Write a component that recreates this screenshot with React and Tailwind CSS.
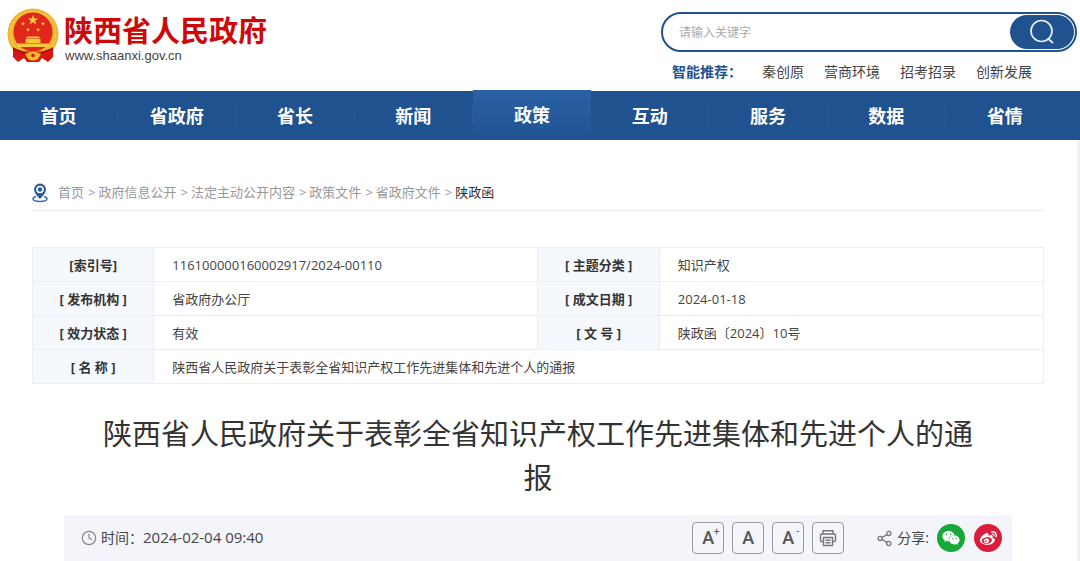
import { Clock, Share2 } from "lucide-react";
import { FaWeixin, FaWeibo } from "react-icons/fa";

const NAV = ["首页", "省政府", "省长", "新闻", "政策", "互动", "服务", "数据", "省情"];
const HOT_WORDS = ["秦创原", "营商环境", "招考招录", "创新发展"];
const CRUMBS = ["首页", "政府信息公开", "法定主动公开内容", "政策文件", "省政府文件"];

const ROWS = [
  ["[索引号]", "116100000160002917/2024-00110", "[ 主题分类 ]", "知识产权"],
  ["[ 发布机构 ]", "省政府办公厅", "[ 成文日期 ]", "2024-01-18"],
  ["[ 效力状态 ]", "有效", "[ 文 号 ]", "陕政函〔2024〕10号"],
];

const TITLE = "陕西省人民政府关于表彰全省知识产权工作先进集体和先进个人的通报";

function Emblem() {
  return (
    <svg viewBox="0 0 52 56" className="h-14 w-[52px]" aria-hidden="true">
      <circle cx="26" cy="26" r="25.5" fill="#ecb62f" />
      <circle cx="26" cy="26" r="22.5" fill="none" stroke="#f3c544" strokeWidth="2" strokeDasharray="4 1" />
      <circle cx="26" cy="24" r="19.5" fill="#e1261c" />
      <path d="M26 7l1.400 3.500h3.800l-3 2.300 1.100 3.600-3.300-2.200-3.300 2.200 1.100-3.600-3-2.300h3.800z" fill="#f8c93a" />
      <g fill="#f8c93a">
        <path d="M16 13.500l.6 1.500h1.600l-1.300 1 .5 1.500-1.400-.9-1.400.9.500-1.500-1.300-1h1.600z" />
        <path d="M36 13.500l.6 1.500h1.600l-1.300 1 .5 1.500-1.400-.9-1.400.9.500-1.500-1.300-1h1.600z" />
        <path d="M21 19.500l.6 1.500h1.600l-1.300 1 .5 1.500-1.400-.9-1.400.9.500-1.500-1.300-1h1.600z" />
        <path d="M31 19.500l.6 1.500h1.600l-1.300 1 .5 1.500-1.400-.9-1.400.9.500-1.500-1.300-1h1.600z" />
        <path d="M20 28.500h12l1 2h-14zM18.500 31h15v4h-15zM10 35.500h32v3.500H10z" />
      </g>
      <path d="M6 39 Q12 43 19 43.500 L33 43.500 Q40 43 46 39 L46 49 L41 54 L35 50 L32 54 L20 54 L17 50 L11 54 L6 49 Z" fill="#d5180f" />
      <path d="M6 41 Q14 43 18 46 M46 41 Q38 43 34 46" fill="none" stroke="#b00d0a" strokeWidth="1.500" />
      <path d="M18 46q8-5 16 0l-3 5q-5 3-10 0z" fill="#f0b92e" />
      <circle cx="26" cy="47.500" r="1.800" fill="#d5180f" />
    </svg>
  );
}

function PinIcon() {
  return (
    <svg viewBox="0 0 16 20" className="h-5 w-4 shrink-0" fill="none" aria-hidden="true">
      <path d="M4 13.500C2 14 1 14.900 1 15.800 1 17.400 4 18.500 8 18.500s7-1.100 7-2.700c0-.9-1-1.800-3-2.300" stroke="#3f6da5" strokeWidth="1.500" />
      <path d="M8 .500a6 6 0 0 0-6 6C2 10.500 8 16 8 16s6-5.500 6-9.500a6 6 0 0 0-6-6z" fill="#2b5b97" />
      <circle cx="8" cy="6.500" r="3.800" fill="#fff" />
      <circle cx="8" cy="6.500" r="2.200" fill="#2b5b97" />
    </svg>
  );
}

function PrintIcon() {
  return (
    <svg viewBox="0 0 18 18" className="size-[18px]" fill="none" stroke="#777" strokeWidth="1.400" aria-hidden="true">
      <path d="M4 5V1.700h10V5" />
      <path d="M4.500 12.500H2.800c-.8 0-1.300-.5-1.300-1.300V6.300C1.500 5.500 2 5 2.800 5h12.400c.8 0 1.300.5 1.300 1.300v4.900c0 .8-.5 1.300-1.300 1.300h-1.700" />
      <path d="M4.500 8.500h9v8h-9zM6.500 11.200h5M6.500 13.800h5" />
    </svg>
  );
}

function ToolButton({ label, children }) {
  return (
    <button
      type="button"
      aria-label={label}
      className="relative flex size-8 items-center justify-center rounded-sm border border-[#999] font-['Roboto','Liberation_Sans',sans-serif] text-lg font-medium leading-none text-[#555]"
    >
      {children}
    </button>
  );
}

export default function App() {
  return (
    <div className="flex min-h-screen flex-col bg-white font-['Open_Sans','Noto_Sans_CJK_SC',sans-serif] text-[13px] text-[#444]">

      {/* HEADER */}
      <header className="flex h-[91px] items-start justify-between pl-[7px] pr-[3px]">
        <a href="#" className="flex items-start gap-[5px] pt-2">
          <Emblem />
          <span className="flex flex-col pt-[7px]">
            <span className="text-[29px] font-bold leading-8 text-[#cc0a0a]">陕西省人民政府</span>
            <span className="pl-px pt-px font-['Liberation_Sans',sans-serif] text-[13px] leading-4 text-[#444]">
              www.shaanxi.gov.cn
            </span>
          </span>
        </a>

        <div className="w-[416px] pt-3">
          <form className="flex h-10 items-stretch rounded-full border-2 border-[#20528f] p-px">
            <input
              type="text"
              aria-label="关键字"
              placeholder="请输入关键字"
              className="min-w-0 flex-1 bg-transparent pl-[15px] pt-[2px] text-xs outline-none placeholder:text-[#aaa]"
            />
            <button
              type="button"
              aria-label="搜索"
              className="flex w-16 items-center justify-center rounded-full bg-[#20528f]"
            >
              <svg viewBox="0 0 26 26" className="size-[26px]" fill="none" stroke="#e8eef6" strokeWidth="1.700">
                <circle cx="12.500" cy="12" r="10.500" />
                <path d="M19 19.500l5 4.500" />
              </svg>
            </button>
          </form>
          <div className="flex gap-5 pl-[11px] pt-[10px] text-sm leading-5">
            <span className="w-[70px] whitespace-nowrap font-bold text-[#20528f]">智能推荐：</span>
            {HOT_WORDS.map((word) => (
              <a key={word} href="#" className="whitespace-nowrap">{word}</a>
            ))}
          </div>
        </div>
      </header>

      {/* NAV */}
      <nav className="grid h-[49px] grid-cols-9 bg-[#20528f] pr-4 text-lg font-bold text-white">
        {NAV.map((item) =>
          item === "政策" ? (
            <a
              key={item}
              href="#"
              aria-current="page"
              className="-mt-px flex items-center justify-center bg-linear-to-b from-[#2b62a6] to-[#20528f]"
            >
              {item}
            </a>
          ) : (
            <a key={item} href="#" className="group flex items-center">
              <span className="flex-1 text-center">{item}</span>
              <span className="h-[18px] w-px bg-[#2d5d98] group-last:hidden" />
            </a>
          )
        )}
      </nav>

      <main className="flex-1 border-r-[3px] border-[#f1f1f1] pl-8 pr-[33px]">

        {/* BREADCRUMB */}
        <div className="mt-[35px] flex h-9 items-center border-b border-[#eee]">
          <PinIcon />
          <div className="flex gap-[3px] pl-[10px] text-[#999]">
            {CRUMBS.map((crumb) => (
              <span key={crumb} className="flex gap-1">
                <a href="#">{crumb}</a>
                <span>&gt;</span>
              </span>
            ))}
            <span className="text-[#333]">陕政函</span>
          </div>
        </div>

        {/* DOCUMENT INFO */}
        <table className="mt-9 w-full table-fixed border-collapse leading-5">
          <colgroup>
            <col className="w-[12%]" />
            <col className="w-[38%]" />
            <col className="w-[12%]" />
            <col className="w-[38%]" />
          </colgroup>
          <tbody>
            {ROWS.map(([nameA, valueA, nameB, valueB]) => (
              <tr key={nameA} className="h-[34px]">
                <th scope="row" className="border border-[#eee] bg-[#f5f9fd] font-bold text-[#333]">{nameA}</th>
                <td className="border border-[#eee] px-[18px]">{valueA}</td>
                <th scope="row" className="border border-[#eee] bg-[#f5f9fd] font-bold text-[#333]">{nameB}</th>
                <td className="border border-[#eee] px-[18px]">{valueB}</td>
              </tr>
            ))}
            <tr className="h-[34px]">
              <th scope="row" className="border border-[#eee] bg-[#f5f9fd] font-bold text-[#333]">[ 名 称 ]</th>
              <td colSpan={3} className="border border-[#eee] px-[18px]">{TITLE}</td>
            </tr>
          </tbody>
        </table>

        {/* ARTICLE */}
        <article className="px-8">
          <h1 className="mt-7 px-9 text-center text-[29px] leading-[44px] text-[#333]">{TITLE}</h1>

          <div className="mt-[15px] flex h-[46px] items-center justify-between bg-[#f4f5fb] pl-[17px] pr-[10px]">
            <div className="flex items-center gap-1">
              <Clock size={16} strokeWidth={1.8} color="#888" />
              <span className="flex items-center text-sm">
                时间：<time className="text-[15px]">2024-02-04 09:40</time>
              </span>
            </div>

            <div className="flex items-center">
              <div className="flex gap-2">
                <ToolButton label="放大字号">
                  A<span className="absolute right-1 top-1 text-[10px] font-normal leading-none">+</span>
                </ToolButton>
                <ToolButton label="默认字号">A</ToolButton>
                <ToolButton label="缩小字号">
                  A<span className="absolute right-1 top-1 text-[10px] font-normal leading-none">-</span>
                </ToolButton>
                <ToolButton label="打印">
                  <PrintIcon />
                </ToolButton>
              </div>

              <div className="flex items-center pl-8">
                <Share2 size={17} strokeWidth={1.8} color="#777" />
                <span className="pl-1 text-sm">分享:</span>
                <a href="#" aria-label="微信" className="ml-2 flex size-7 items-center justify-center rounded-full bg-[#17a839]">
                  <FaWeixin size={18} color="#fff" />
                </a>
                <a href="#" aria-label="微博" className="ml-[9px] flex size-7 items-center justify-center rounded-full bg-[#d81e3c]">
                  <FaWeibo size={17} color="#fff" />
                </a>
              </div>
            </div>
          </div>
        </article>
      </main>
    </div>
  );
}
